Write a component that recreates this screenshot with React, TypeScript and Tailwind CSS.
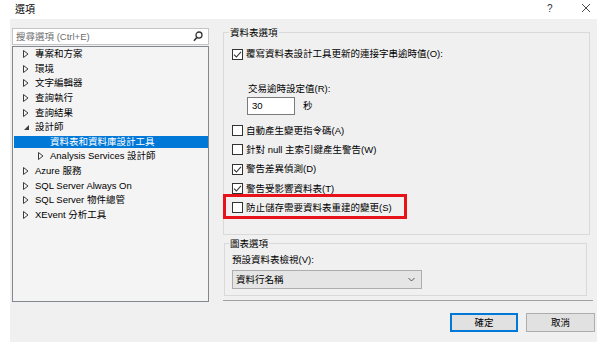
import React from "react";

type TreeItem = {
  label: string;
  level?: number;
  state?: "closed" | "open" | "leaf";
  selected?: boolean;
};

const treeItems: TreeItem[] = [
  { label: "專案和方案" },
  { label: "環境" },
  { label: "文字編輯器" },
  { label: "查詢執行" },
  { label: "查詢結果" },
  { label: "設計師", state: "open" },
  { label: "資料表和資料庫設計工具", level: 1, state: "leaf", selected: true },
  { label: "Analysis Services 設計師", level: 1 },
  { label: "Azure 服務" },
  { label: "SQL Server Always On" },
  { label: "SQL Server 物件總管" },
  { label: "XEvent 分析工具" },
];

function Arrow({ state }: { state: TreeItem["state"] }) {
  if (state === "leaf") return <span className="w-[12px] shrink-0" />;
  if (state === "open") {
    return (
      <span className="flex w-[12px] shrink-0 items-center">
        <svg width="7" height="7" viewBox="0 0 7 7">
          <polygon points="6,1 6,6 1,6" fill="#3c3c3c" />
        </svg>
      </span>
    );
  }
  return (
    <span className="flex w-[12px] shrink-0 items-center">
      <svg width="6" height="8" viewBox="0 0 6 8">
        <polygon points="0.5,0.5 5,4 0.5,7.5" fill="none" stroke="#3c3c3c" strokeWidth="1" />
      </svg>
    </span>
  );
}

function Checkbox({ checked }: { checked?: boolean }) {
  return (
    <span className="flex h-[11px] w-[11px] shrink-0 items-center justify-center border border-[#333] bg-white">
      {checked && (
        <svg width="9" height="9" viewBox="0 0 9 9">
          <path d="M1 4.6 L3.4 7 L8 1.8" fill="none" stroke="#333" strokeWidth="1.1" />
        </svg>
      )}
    </span>
  );
}

function CheckRow({ label, checked }: { label: string; checked?: boolean }) {
  return (
    <div className="flex h-[19.3px] items-center gap-[3px]">
      <Checkbox checked={checked} />
      <span>{label}</span>
    </div>
  );
}

export default function App() {
  return (
    <div className="h-[342px] w-[600px] overflow-hidden bg-white font-['Liberation_Sans','Noto_Sans_CJK_TC',sans-serif] text-[9.5px] leading-[14px] text-black">
      {/* title bar */}
      <div className="relative flex h-[19px] items-center">
        <span className="pl-[15px] text-[10px]">選項</span>
        <span className="absolute left-[547px] top-[2px] text-[10px] text-[#333]">?</span>
        <span className="absolute left-[581px] top-[3px]">
          <svg width="10" height="10" viewBox="0 0 10 10">
            <path d="M1 1 L9 9 M9 1 L1 9" stroke="#333" strokeWidth="0.9" />
          </svg>
        </span>
      </div>

      <div className="ml-[10px] flex h-[323px] w-[587px] bg-[#f0f0f0]">
        {/* left: search + tree */}
        <div className="ml-[2px] mt-[9px] w-[197px]">
          <div className="flex h-[17px] items-center justify-between border border-[#c5c5c5] bg-white pl-[3px] pr-[5px]">
            <span className="text-[#6d6d6d]">搜尋選項 (Ctrl+E)</span>
            <svg width="10" height="11" viewBox="0 0 10 11">
              <circle cx="6" cy="4" r="3" fill="none" stroke="#333" strokeWidth="1.3" />
              <path d="M4 6.3 L1 9.8" stroke="#333" strokeWidth="1.6" />
            </svg>
          </div>
          <div className="mt-[1px] h-[256px] border border-[#828790] bg-[#f4f4f4]">
            {treeItems.map((item) => (
              <div key={item.label} className="flex h-[14.6px] items-center pl-[1px]">
                <div
                  className={`flex h-[12px] w-full items-center ${item.selected ? "bg-[#0078d7] text-white" : ""}`}
                  style={{ paddingLeft: 9 + (item.level ?? 0) * 15 }}
                >
                  <Arrow state={item.state ?? "closed"} />
                  <span className="whitespace-nowrap">{item.label}</span>
                </div>
              </div>
            ))}
          </div>
        </div>

        {/* right: options */}
        <div className="ml-[14px] w-[374px]">
          <div className="relative mt-[13px] h-[203px] w-[367px] border border-[#d9d9d9] pl-[8px] pt-[14px]">
            <span className="absolute -top-[7px] left-[5px] bg-[#f0f0f0] px-[1px] leading-[13px]">資料表選項</span>
            <div className="flex h-[14px] items-center gap-[3px]">
              <Checkbox checked />
              <span>覆寫資料表設計工具更新的連接字串逾時值(O):</span>
            </div>
            <div className="mt-[21px] h-[14px] pl-[16px]">交易逾時設定值(R):</div>
            <div className="mt-[1px] flex h-[18px] items-center pl-[15px]">
              <div className="flex h-[18px] w-[48px] items-center border border-[#7a7a7a] bg-white pl-[4px]">30</div>
              <span className="ml-[8px]">秒</span>
            </div>
            <div className="mt-[6px]">
              <CheckRow label="自動產生變更指令碼(A)" />
              <CheckRow label="針對 null 主索引鍵產生警告(W)" />
              <CheckRow label="警告差異偵測(D)" checked />
              <CheckRow label="警告受影響資料表(T)" checked />
              <div className="relative">
                <CheckRow label="防止儲存需要資料表重建的變更(S)" />
                <span className="absolute -left-[9px] -top-[4px] h-[25px] w-[184px] border-[3px] border-[#e8121a]" />
              </div>
            </div>
          </div>

          <div className="relative ml-[1px] mt-[8px] h-[53px] w-[363px] border border-[#d9d9d9] pl-[7px] pt-[9px]">
            <span className="absolute -top-[7px] left-[4px] bg-[#f0f0f0] px-[1px] leading-[13px]">圖表選項</span>
            <div className="h-[14px]">預設資料表檢視(V):</div>
            <div className="mt-[3px] flex h-[19px] w-[190px] items-center justify-between border border-[#adadad] bg-[#e5e5e5] pl-[3px] pr-[6px]">
              <span>資料行名稱</span>
              <svg width="7" height="5" viewBox="0 0 7 5">
                <path d="M0.5 1 L3.5 4 L6.5 1" fill="none" stroke="#444" strokeWidth="0.9" />
              </svg>
            </div>
          </div>

          <div className="mt-[4px] h-px w-[370px] bg-[#a0a0a0]" />

          <div className="mt-[12px] flex justify-end gap-[8px] pr-[2px]">
            <button className="flex h-[19px] w-[68px] items-center justify-center border-2 border-[#0078d7] bg-[#e1e1e1]">確定</button>
            <button className="flex h-[19px] w-[69px] items-center justify-center border border-[#adadad] bg-[#e1e1e1]">取消</button>
          </div>
        </div>
      </div>
    </div>
  );
}
